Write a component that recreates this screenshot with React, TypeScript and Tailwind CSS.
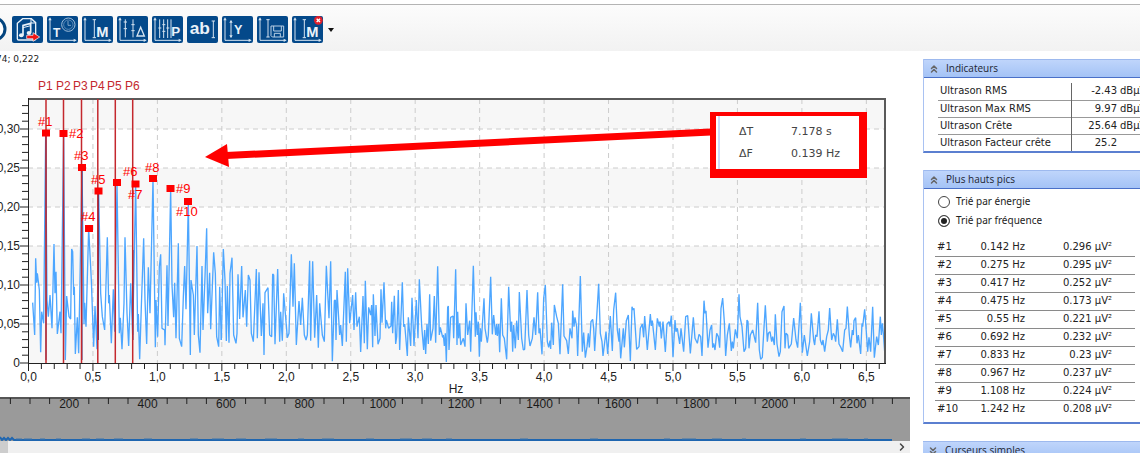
import React, { useState } from 'react';
import { ChevronRight, ChevronsDown, ChevronsUp } from 'lucide-react';

interface Peak {
  id: string;
  freq: string;
  amp: string;
  x: number;
  y: number;
  labelX: number;
  labelY: number;
}

const peaks: Peak[] = [
  { id: '#1', freq: '0.142', amp: '0.296', x: 46, y: 133, labelX: 38, labelY: 126 },
  { id: '#2', freq: '0.275', amp: '0.295', x: 63.5, y: 133.5, labelX: 69, labelY: 138 },
  { id: '#3', freq: '0.417', amp: '0.252', x: 82, y: 167.5, labelX: 74, labelY: 160 },
  { id: '#4', freq: '0.475', amp: '0.173', x: 89, y: 228.5, labelX: 81, labelY: 221 },
  { id: '#5', freq: '0.55', amp: '0.221', x: 98.5, y: 191, labelX: 91, labelY: 184 },
  { id: '#6', freq: '0.692', amp: '0.232', x: 117, y: 182.5, labelX: 123, labelY: 176 },
  { id: '#7', freq: '0.833', amp: '0.23', x: 135.5, y: 184, labelX: 128, labelY: 199 },
  { id: '#8', freq: '0.967', amp: '0.237', x: 153, y: 178.5, labelX: 145, labelY: 172 },
  { id: '#9', freq: '1.108', amp: '0.224', x: 170.5, y: 188.5, labelX: 176, labelY: 193 },
  { id: '#10', freq: '1.242', amp: '0.208', x: 188, y: 201.5, labelX: 176, labelY: 216 },
];

const indicators = [
  { name: 'Ultrason RMS', value: '-2.43', unit: 'dBµV' },
  { name: 'Ultrason Max RMS', value: '9.97', unit: 'dBµV' },
  { name: 'Ultrason Crête', value: '25.64', unit: 'dBµV' },
  { name: 'Ultrason Facteur crête', value: '25.2', unit: '' },
];

const cursors = [
  { name: 'P1', x: 46, labelX: 38 },
  { name: 'P2', x: 63.5, labelX: 56 },
  { name: 'P3', x: 81.5, labelX: 73 },
  { name: 'P4', x: 97.8, labelX: 90 },
  { name: 'P5', x: 115.3, labelX: 107 },
  { name: 'P6', x: 132.7, labelX: 125 },
];

// spectrum samples, three units per pixel, each run starts at its own offset
const spectrum = [
  {
    offset: 0,
    points:
      '98,248 104,345 107,115 110,188 112,160 118,210 122,397 125,275 131,310 137,-261 141,240 145,290 150,225 156,325 162,72 165,220 168,155 172,342 180,275 183,340 191,-257 196,420 200,228 207,290 212,297 215,87 218,95 221,225 223,200 226,402 232,292 236,400 246,-157 252,312 254,248 258,320 266,25 274,180 281,380 285,258 291,388 296,-86 302,220 307,290 314,330 322,52 326,250 328,225 334,370 340,208 344,335 351,-111 358,340 361,293 366,388 372,250 375,52 381,280 386,378 392,190 398,345 407,-106 413,335 415,282 419,418 424,260 431,55 435,240 440,372 445,142 450,280 459,-122 466,382 468,240 473,350 478,140 482,103 486,325 494,330 495,376 501,136 504,318 512,-92 516,195 521,292 524,188 528,355 535,70 538,355 545,380 550,230 554,138 558,268 565,-52 571,405 573,180 580,225 583,345 591,78 595,345 600,398 606,138 609,330 615,170 620,25 623,280 629,158 632,328 641,97 646,160 650,350 656,380 659,200 664,360',
  },
  {
    offset: 660,
    points:
      '4,360 10,87 15,180 19,363 22,198 27,368 30,160 36,113 41,345 48,370 51,340 54,163 59,297 65,138 69,292 76,210 80,320 85,165 90,180 94,340 100,365 109,147 112,355 117,157 124,348 129,250 132,405 135,218 144,203 149,345 155,350 158,162 161,165 165,373 173,147 179,365 182,275 187,362 191,220 202,353 207,340 214,103 219,260 223,130 229,375 237,243 242,315 247,233 253,345 258,360 262,345 269,122 272,362 278,124 284,353 290,225 295,383 299,250 307,345 313,365 319,137 327,295 332,124 337,424 343,242 346,240 348,360 351,210 359,345 362,315 367,378 376,155 379,365 383,145 389,310 398,225 402,330 407,217 411,320 418,290 422,396 429,228 433,370 436,182 442,388 446,262 452,285 455,255 458,382 460,223 465,348 468,255 474,373 480,355 483,208 486,308 492,187 497,325 499,300 506,325 513,318 515,245 518,340 523,227 527,372 530,350 535,210 539,390 547,187 551,320 554,312 562,408 565,292 572,378 576,233 582,378 589,240 594,355 598,178 605,318 611,390 614,330 617,402 621,312 625,372 629,223 632,362 639,325 643,228 647,368 653,139 658,345 661,322 668,352',
  },
  {
    offset: 1320,
    points:
      '8,352 10,345 13,378 16,340 19,426 23,262 25,258 27,390 32,292 39,288 41,355 47,148 51,375 53,275 56,355 59,310 62,375 70,355 75,380 78,250 83,345 89,302 92,395 100,137 106,350 108,277 112,345 115,305 118,410 121,325 124,365 132,235 135,325 142,368 145,345 152,170 157,343 161,285 167,345 170,312 172,348 176,312 179,397 184,235 188,345 193,355 200,418 206,200 212,335 215,305 218,395 221,315 226,385 230,302 235,360 238,216 245,355 250,390 254,388 261,210 266,345 270,378 277,355 282,292 287,345 293,217 297,340 300,325 306,403 311,235 316,195 322,365 326,382 330,362 332,387 335,308 340,375 343,255 350,290 355,310 360,403 368,193 372,348 380,362 385,402 390,325 396,355 398,272 402,320 405,292 410,320 413,408 421,168 427,395 431,338 436,413 441,380 445,340 448,382 453,305 458,298 461,325 464,393 476,191 481,340 486,365 489,408 498,335 503,402 511,288 517,393 521,270 527,218 532,330 537,365 538,325 542,415 550,325 553,382 559,302 565,285 571,423 576,260 579,270 582,265 590,388 597,380 601,325 607,312 611,352 614,288 622,390 631,282 634,318 637,302 646,390 652,295 658,320 660,305',
  },
  {
    offset: 1980,
    points:
      '0,305 4,355 9,305 16,396 21,312 27,305 30,320 34,287 39,412 45,300 48,335 52,325 59,372 63,325 71,395 77,290 83,287 91,400 100,292 105,355 112,370 117,343 122,350 126,408 132,242 135,280 138,272 144,383 150,330 155,315 158,383 161,370 165,390 170,340 175,350 179,383 183,265 188,234 193,305 197,408 202,345 208,310 214,393 217,365 220,385 226,328 232,355 237,223 240,290 246,320 252,395 257,385 261,300 264,305 267,385 271,345 278,330 287,368 293,248 298,390 302,418 307,412 311,340 316,256 322,365 325,340 330,335 335,365 338,350 343,375 346,283 351,372 357,410 361,395 366,275 372,258 375,385 378,340 383,345 386,385 394,372 401,294 408,360 413,383 421,248 427,398 433,345 442,408 449,365 454,280 461,360 464,375 467,345 471,350 477,274 481,360 486,375 489,360 494,395 500,350 505,330 509,264 515,360 520,340 524,348 527,365 532,298 537,372 543,383 548,395 554,330 558,325 562,260 568,345 572,382 577,330 580,345 582,302 587,293 591,370 595,345 602,402 606,310 608,320 614,268 620,350 623,395 627,352 632,395 638,260 643,413 650,350 655,375 661,290 664,345 667,310 670,340 674,395',
  },
];

const xAt = (hz: number) => 28.5 + hz * 128.9;
const yAt = (v: number) => 363 - v * 780;

const Axes = () => (
  <>
    <path d="M9 8V73H85" fill="none" stroke="#d5e3f0" strokeWidth="3" />
    <path d="M4 13L9 4L14 13ZM80 68L89 73L80 78Z" fill="#d5e3f0" />
  </>
);

const Letter = ({ x, y, size, children }: { x: number; y: number; size: number; children: string }) => (
  <text x={x} y={y} fontSize={size} fill="#eaf2f9" className="font-['Liberation_Sans',sans-serif] font-bold">
    {children}
  </text>
);

const IBeam = ({ x, y1, y2 }: { x: number; y1: number; y2: number }) => (
  <path
    d={`M${x} ${y1}V${y2}M${x - 5} ${y1}h10M${x - 5} ${y2}h10`}
    fill="none"
    stroke="#d5e3f0"
    strokeWidth="3"
  />
);

const tools = [
  {
    label: 'Exporter le son',
    icon: (
      <>
        <path d="M32 8H58L71 20V68Q71 72 67 72H20Q16 72 16 68V22Z" fill="none" stroke="#eaf2f9" strokeWidth="4" />
        <path d="M57 8V21H71" fill="none" stroke="#eaf2f9" strokeWidth="3" />
        <path d="M33 57V28L56 22V50" fill="none" stroke="#eaf2f9" strokeWidth="5" />
        <path d="M33 35L56 29" stroke="#eaf2f9" strokeWidth="3" />
        <ellipse cx="28" cy="58" rx="7" ry="6" fill="#eaf2f9" />
        <ellipse cx="51" cy="51" rx="7" ry="6" fill="#eaf2f9" />
        <path d="M44 58H63V50L83 63L63 76V68H44Z" fill="#f01414" stroke="#fff" strokeWidth="2" />
      </>
    ),
  },
  {
    label: 'Temps',
    icon: (
      <>
        <Axes />
        <Letter x={18} y={63} size={36}>T</Letter>
        <circle cx="64" cy="26" r="20" fill="none" stroke="#9fbcd8" strokeWidth="3" />
        <circle cx="64" cy="26" r="14" fill="none" stroke="#7fa5c9" strokeWidth="2" />
        <path d="M63 15V28H72" fill="none" stroke="#b8cfe4" strokeWidth="2" />
      </>
    ),
  },
  {
    label: 'Maximum',
    icon: (
      <>
        <Axes />
        <IBeam x={37} y1={11} y2={65} />
        <Letter x={43} y={62} size={44}>M</Letter>
      </>
    ),
  },
  {
    label: 'Delta',
    icon: (
      <>
        <Axes />
        <path d="M25 10V64M48 10V64" stroke="#d5e3f0" strokeWidth="3" />
        <path d="M20 18h10M20 38h10M43 26h10M43 44h10" stroke="#d5e3f0" strokeWidth="3" />
        <path d="M60 60L71 34L82 60Z" fill="none" stroke="#d5e3f0" strokeWidth="4" />
      </>
    ),
  },
  {
    label: 'Pics',
    icon: (
      <>
        <Axes />
        <path d="M23 10V66M35 10V66M47 10V66M57 10V66" stroke="#d5e3f0" strokeWidth="3" />
        <path d="M19 36h9M31 26h9M31 46h9M43 36h9" stroke="#d5e3f0" strokeWidth="3" />
        <Letter x={58} y={60} size={40}>P</Letter>
      </>
    ),
  },
  {
    label: 'Texte',
    icon: (
      <>
        <Letter x={8} y={55} size={52}>ab</Letter>
        <IBeam x={79} y1={15} y2={65} />
      </>
    ),
  },
  {
    label: 'Axe Y',
    icon: (
      <>
        <Axes />
        <path d="M27 16V62" stroke="#d5e3f0" strokeWidth="3" />
        <path d="M22 20L27 11L32 20ZM22 58L27 67L32 58Z" fill="#d5e3f0" />
        <Letter x={36} y={54} size={38}>Y</Letter>
      </>
    ),
  },
  {
    label: 'Enregistrer',
    icon: (
      <>
        <Axes />
        <IBeam x={33} y1={11} y2={63} />
        <path d="M42 30H80V63H46L42 59Z" fill="none" stroke="#b8cfe4" strokeWidth="3" />
        <path d="M50 30V45H73V30M52 63V52H70V63" fill="none" stroke="#b8cfe4" strokeWidth="3" />
      </>
    ),
  },
  {
    label: 'Effacer le maximum',
    icon: (
      <>
        <Axes />
        <IBeam x={37} y1={11} y2={65} />
        <Letter x={43} y={62} size={44}>M</Letter>
        <circle cx="79" cy="13" r="13" fill="#e0202c" />
        <path d="M74 8L84 18M84 8L74 18" stroke="#fff" strokeWidth="4" />
      </>
    ),
  },
];

function Toolbar() {
  return (
    <header className="mt-1 flex items-center gap-1 border-t border-[#b4b4b4] bg-linear-to-b from-[#fcfcfc] to-[#f2f2f2] pt-[11px] pb-2">
      <button aria-label="Lecture" className="h-[27px] w-2">
        <svg viewBox="0 0 8 27" className="block h-[27px] w-2">
          <circle cx="-6" cy="13" r="11" fill="#fff" stroke="#04457f" strokeWidth="3" />
        </svg>
      </button>
      {tools.map(tool => (
        <button
          key={tool.label}
          aria-label={tool.label}
          className="h-[27px] w-[31px] overflow-hidden rounded-xs bg-[#04498a]"
        >
          <svg viewBox="0 0 93 81" className="block h-[27px] w-[31px]">
            {tool.icon}
          </svg>
        </button>
      ))}
      <button aria-label="Plus d'outils" className="w-2">
        <svg viewBox="0 0 8 4" className="block h-1 w-2">
          <path d="M1 0H7L4 4Z" fill="#111" />
        </svg>
      </button>
    </header>
  );
}

function SpectrumChart() {
  return (
    <svg viewBox="0 67 910 330" className="block w-full font-['Liberation_Sans',sans-serif] text-[12px]">
      {/* alternating bands */}
      <g fill="#f7f7f7">
        <rect x="28" y="99" width="857" height="30" />
        <rect x="28" y="168" width="857" height="39" />
        <rect x="28" y="246" width="857" height="39" />
        <rect x="28" y="324" width="857" height="39" />
      </g>

      <g stroke="#cccccc" strokeDasharray="5 4">
        {[1, 2, 3, 4, 5, 6].map(i => (
          <path key={i} d={`M28 ${yAt(i * 0.05)}H885`} />
        ))}
        {Array.from({ length: 13 }, (_, i) => (
          <path key={i} d={`M${xAt((i + 1) * 0.5)} 99V363`} />
        ))}
      </g>

      {spectrum.map(run => (
        <g key={run.offset} transform={`translate(${run.offset / 3} 220) scale(0.33333)`}>
          <polyline points={run.points} fill="none" stroke="#4da6ff" strokeWidth="4" strokeLinejoin="bevel" />
        </g>
      ))}

      {/* darker first peaks behind the cursors */}
      <path d="M46 133V360M63.5 134V361M82 168V360M98.5 192V340M133 250V340" stroke="#27408f" strokeWidth="1" />

      <g stroke="#222222">
        {Array.from({ length: 34 }, (_, i) => (
          <path key={i} d={`M${i % 5 === 0 ? 20 : 22} ${yAt(i * 0.01)}H28`} />
        ))}
        {Array.from({ length: 67 }, (_, i) => (
          <path key={i} d={`M${xAt(i * 0.1)} 363v${i % 5 === 0 ? 8 : 6}`} />
        ))}
      </g>
      <path d="M28 99H885V363" fill="none" stroke="#5a5a5a" strokeWidth="2" />
      <path d="M28.5 98V363.5H886" fill="none" stroke="#222222" />

      <g fill="#222222" textAnchor="end">
        <text x="20" y="367">0</text>
        {['0,05', '0,10', '0,15', '0,20', '0,25', '0,30'].map((label, i) => (
          <text key={label} x="20" y={yAt((i + 1) * 0.05) + 4}>{label}</text>
        ))}
      </g>
      <g fill="#222222" textAnchor="middle">
        {Array.from({ length: 14 }, (_, i) => (
          <text key={i} x={xAt(i * 0.5)} y="381">
            {(i * 0.5).toFixed(1).replace('.', ',')}
          </text>
        ))}
        <text x="456" y="393">Hz</text>
      </g>

      {cursors.map(c => (
        <g key={c.name}>
          <path d={`M${c.x} 99V363`} stroke="#c4282e" strokeWidth="1.5" />
          <text x={c.labelX} y="90" fill="#c4282e">{c.name}</text>
        </g>
      ))}
      {peaks.map(p => (
        <g key={p.id} fill="#ff0000">
          <rect x={p.x - 4} y={p.y - 3.5} width="8" height="7" />
          <text x={p.labelX} y={p.labelY} className="text-[13px]">{p.id}</text>
        </g>
      ))}

      {/* callout with its arrow */}
      <path d="M711 132L226 155.5" stroke="#ff0000" strokeWidth="7" />
      <path d="M205 157L227 144L229 167Z" fill="#ff0000" />
      <rect x="710" y="112" width="157" height="66" fill="#ff0000" />
      <rect x="716" y="116" width="143" height="53" fill="#ffffff" />
      <rect x="718" y="116" width="2" height="53" fill="#cfdcfa" />
      <g fill="#444444" className="font-['DejaVu_Sans',sans-serif] text-[11px]">
        <text x="739" y="135">ΔT</text>
        <text x="791" y="135">7.178 s</text>
        <text x="739" y="157">ΔF</text>
        <text x="791" y="157">0.139 Hz</text>
      </g>
    </svg>
  );
}

function Overview() {
  return (
    <svg viewBox="0 397 910 44" className="block w-full font-['Liberation_Sans',sans-serif] text-[12px]">
      <rect x="0" y="397" width="910" height="44" fill="#9a9a9a" />
      <path d="M0 398H910" stroke="#555555" strokeWidth="2" />
      {Array.from({ length: 46 }, (_, i) => {
        const x = 10.4 + i * 19.6;
        return i % 4 === 3 ? (
          <text key={i} x={x} y="408" textAnchor="middle" fill="#1a1a1a">
            {((i + 1) / 4) * 200}
          </text>
        ) : (
          <path key={i} d={`M${x} 398v6`} stroke="#222222" />
        );
      })}
      <path d="M0 437L2 440L4 438L6 440L8 438L10 440L12 438L14 440H892" fill="none" stroke="#1f66b0" strokeWidth="2" />
      <path
        d="M16 439h6M24 439h8M40 439h5M56 439h5M82 439h8M96 439h8M114 439h9M144 439h8M190 439h8M212 439h12M236 439h10M265 439h12M298 439h6M322 439h12M366 439h8M400 439h12M422 439h10M446 439h6M520 439h8M590 439h8M664 439h6M682 439h14M712 439h10M742 439h4M800 439h6M832 439h16M864 439h4"
        stroke="#3c74ac"
      />
    </svg>
  );
}

interface PanelProps {
  title: string;
  children: React.ReactNode;
}

function Panel({ title, children }: PanelProps) {
  return (
    <section className="border-b-2 border-l border-b-[#5b7fd0] border-l-[#a9c2f2]">
      <PanelHeader title={title} open />
      {children}
    </section>
  );
}

function PanelHeader({ title, open }: { title: string; open?: boolean }) {
  const Icon = open ? ChevronsUp : ChevronsDown;
  return (
    <h2 className="flex h-[19px] items-center gap-1.5 border-y border-t-[#9db9ee] border-b-[#4a70c8] bg-linear-to-b from-[#bfd5fb] to-[#a4c3f6] pl-1 font-['Open_Sans',sans-serif] text-[10px] text-[#1c2430]">
      <Icon className="size-3 stroke-3 text-[#666]" />
      {title}
    </h2>
  );
}

export default function App() {
  const [sort, setSort] = useState('frequence');

  return (
    <div className="overflow-hidden bg-white font-['DejaVu_Sans',sans-serif] text-[10px] text-[#222]">
      <Toolbar />
      <div className="flex gap-[13px]">
        <main className="min-w-0 flex-1 overflow-hidden">
          <p className="-ml-1 h-4 text-[9px] leading-4">74; 0,222</p>
          <SpectrumChart />
          <Overview />
          <div className="flex h-3 items-center justify-between bg-[#f0f0f0]">
            <div className="h-3 w-2 bg-[#cdcdcd]" />
            <button aria-label="Défiler à droite" className="px-0.5">
              <ChevronRight className="size-3 stroke-3 text-[#444]" />
            </button>
          </div>
        </main>

        <aside className="flex w-[217px] shrink-0 flex-col gap-[17px] overflow-hidden pt-2">
          <Panel title="Indicateurs">
            <table className="mt-[5px] ml-[14px] w-[220px] table-fixed border-collapse">
              <tbody>
                {indicators.map(row => (
                  <tr key={row.name} className="h-[17px] border-b border-[#999] last:border-b-0">
                    <td className="w-[133px] border-r border-[#666] pl-0.5 leading-4 whitespace-nowrap">{row.name}</td>
                    <td className="w-[46px] text-right leading-4">{row.value}</td>
                    <td className="pl-[3px] leading-4">{row.unit}</td>
                  </tr>
                ))}
              </tbody>
            </table>
          </Panel>

          <Panel title="Plus hauts pics">
            <div className="pt-[3px] pl-[14px] font-['Noto_Sans',sans-serif]">
              {[
                { id: 'energie', label: 'Trié par énergie' },
                { id: 'frequence', label: 'Trié par fréquence' },
              ].map(option => (
                <label key={option.id} className="flex h-[19px] items-center gap-1.5">
                  <input
                    type="radio"
                    name="sort"
                    checked={sort === option.id}
                    onChange={() => setSort(option.id)}
                    className="size-3 appearance-none rounded-full border border-[#444] bg-white checked:bg-[#222] checked:shadow-[inset_0_0_0_2px_white]"
                  />
                  {option.label}
                </label>
              ))}
            </div>
            <table className="mt-2 mb-1 ml-[11px] w-[200px] table-fixed border-collapse">
              <tbody>
                {peaks.map(p => (
                  <tr key={p.id} className="h-[18px] border-b border-[#8a8a8a] last:border-b-0">
                    <td className="w-[32px] pl-0.5 leading-4">{p.id}</td>
                    <td className="w-[58px] text-right leading-4">{p.freq} Hz</td>
                    <td className="w-[87px] text-right leading-4">{p.amp} µV²</td>
                    <td />
                  </tr>
                ))}
              </tbody>
            </table>
          </Panel>

          <div className="h-3 overflow-hidden">
            <PanelHeader title="Curseurs simples" />
          </div>
        </aside>
      </div>
    </div>
  );
}
